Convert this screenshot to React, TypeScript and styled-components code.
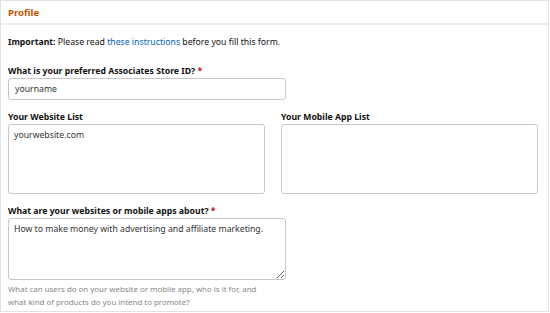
import React from 'react';
import styled, { createGlobalStyle } from 'styled-components';

const GlobalStyle = createGlobalStyle`
  html, body {
    margin: 0;
    padding: 0;
    background: #fff;
  }
  body {
    font-family: "Noto Sans", "Open Sans", Arial, sans-serif;
    color: #111;
  }
`;

const Card = styled.section`
  width: 547px;
  height: 310px;
  border: 1px solid #e3e3e3;
  background: #fff;
  box-sizing: content-box;
`;

const Header = styled.div`
  height: 22px;
  padding-left: 7px;
  display: flex;
  align-items: center;
  border-bottom: 2px solid #eeeeee;
`;

const HeaderTitle = styled.h2`
  margin: 0;
  font-size: 9.6px;
  font-weight: 700;
  color: #c45500;
`;

const Body = styled.div`
  padding: 11px 11px 0 7px;
`;

const Notice = styled.p`
  margin: 0 0 16px;
  font-size: 8.7px;
  line-height: 13px;
  color: #111;

  b {
    font-weight: 700;
  }

  a {
    color: #0066c0;
    text-decoration: none;
  }
`;

const Field = styled.div<{ $width?: number }>`
  display: flex;
  flex-direction: column;
  width: ${(p) => (p.$width ? `${p.$width}px` : 'auto')};
  margin-bottom: 11px;
`;

const Label = styled.label`
  font-size: 8.7px;
  font-weight: 700;
  line-height: 13px;
  margin-bottom: 0;
  color: #111;
`;

const Required = styled.span`
  color: #c40000;
`;

const TextInput = styled.input`
  box-sizing: border-box;
  height: 22px;
  width: 100%;
  border: 1px solid #c8c8c8;
  border-radius: 3px;
  padding: 0 6px;
  font-family: inherit;
  font-size: 8.7px;
  color: #333;
  outline: none;
`;

const TextArea = styled.textarea<{ $height: number; $resize?: boolean }>`
  box-sizing: border-box;
  height: ${(p) => p.$height}px;
  width: 100%;
  border: 1px solid #c8c8c8;
  border-radius: 3px;
  padding: 4px 5px;
  font-family: inherit;
  font-size: 8.7px;
  line-height: 13px;
  color: #333;
  outline: none;
  resize: ${(p) => (p.$resize ? 'both' : 'none')};
`;

const Columns = styled.div`
  display: grid;
  grid-template-columns: 257px 257px;
  column-gap: 16px;
`;

const Help = styled.p`
  margin: -8px 0 0;
  font-size: 7.9px;
  line-height: 13px;
  color: #888;
  width: 262px;
`;

export default function App() {
  return (
    <>
      <GlobalStyle />
      <Card>
        <Header>
          <HeaderTitle>Profile</HeaderTitle>
        </Header>
        <Body>
          <Notice>
            <b>Important:</b> Please read <a href="#">these instructions</a> before you fill this form.
          </Notice>

          <Field $width={278}>
            <Label htmlFor="storeid">
              What is your preferred Associates Store ID? <Required>*</Required>
            </Label>
            <TextInput id="storeid" defaultValue="yourname" />
          </Field>

          <Columns>
            <Field>
              <Label htmlFor="sites">Your Website List</Label>
              <TextArea id="sites" $height={70} defaultValue="yourwebsite.com" />
            </Field>
            <Field>
              <Label htmlFor="apps">Your Mobile App List</Label>
              <TextArea id="apps" $height={70} />
            </Field>
          </Columns>

          <Field $width={278}>
            <Label htmlFor="about">
              What are your websites or mobile apps about? <Required>*</Required>
            </Label>
            <TextArea
              id="about"
              $height={62}
              $resize
              defaultValue="How to make money with advertising and affiliate marketing."
            />
          </Field>

          <Help>
            What can users do on your website or mobile app, who is it for, and what kind of products do you intend to promote?
          </Help>
        </Body>
      </Card>
    </>
  );
}
